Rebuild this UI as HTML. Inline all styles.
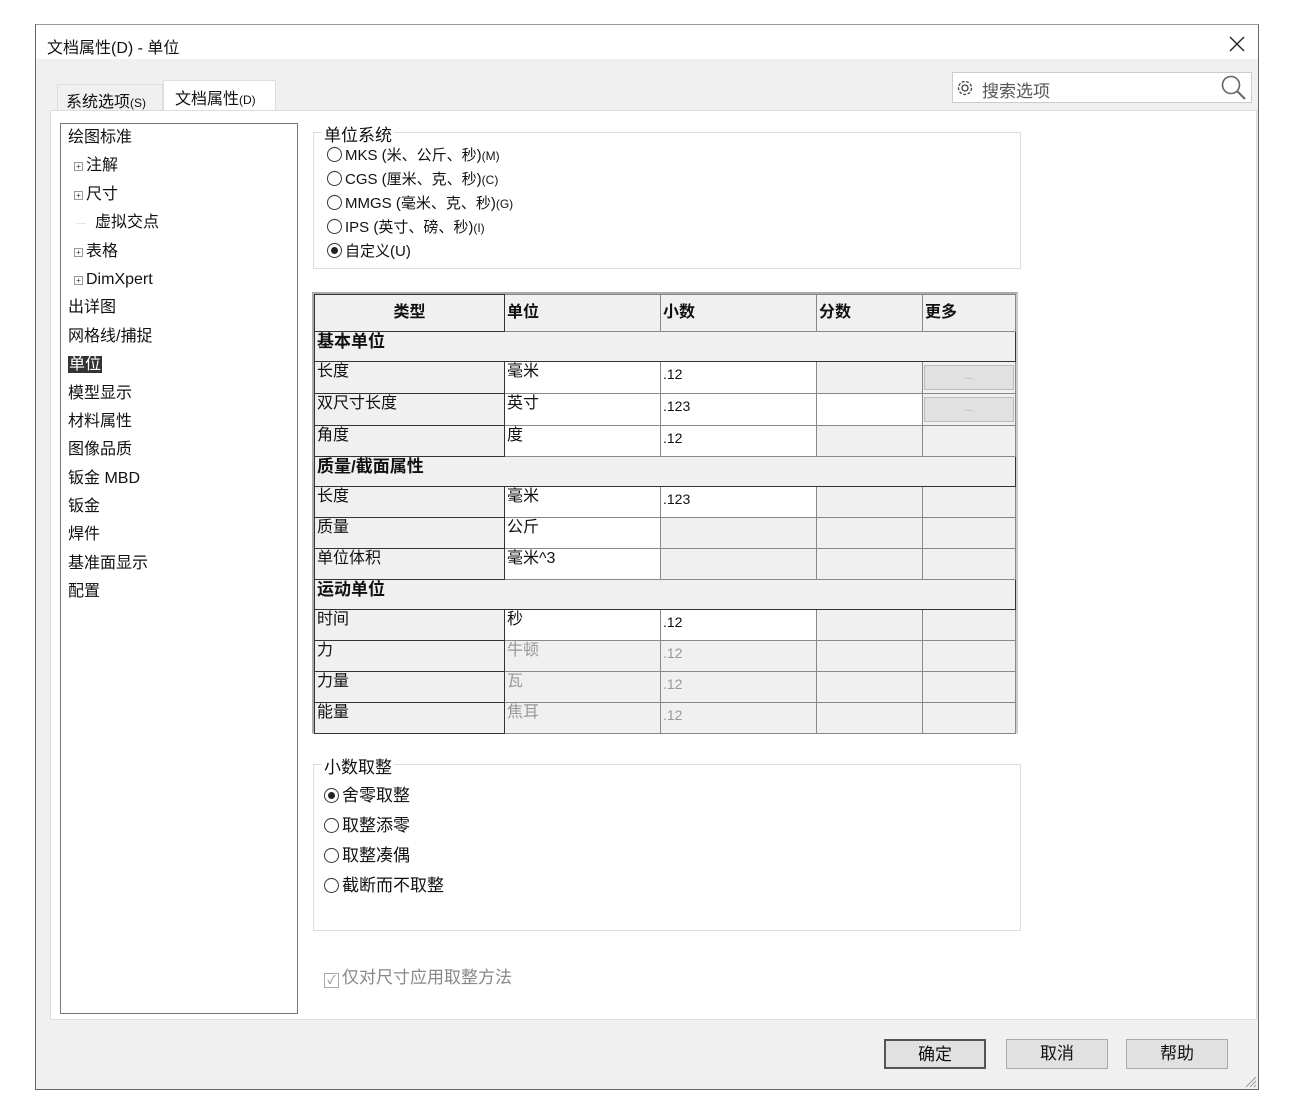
<!DOCTYPE html>
<html><head><meta charset="utf-8"><style>
*{margin:0;padding:0;box-sizing:border-box}
body{width:1306px;height:1106px;background:#fff;font-family:"Liberation Sans","Noto Sans CJK SC",sans-serif;font-size:16px;color:#111;position:relative;overflow:hidden}
.a{position:absolute}
.dlg{left:35px;top:24px;width:1224px;height:1066px;border:1px solid #666;border-top:1px solid #999;background:#f0f0f0}
.tb{left:36px;top:25px;width:1222px;height:34px;background:#fff}
table{border-collapse:collapse;table-layout:fixed;position:absolute;left:314px;top:294px}
td{border:1px solid #888;height:31px;vertical-align:top;padding:0 2px;font-size:16px;line-height:20px;background:#f0f0f0;white-space:nowrap;overflow:hidden}
td.t{border:1.5px solid #333}
td.w{background:#fff}
td.g{color:#999}
td.n{font-size:14px;padding-top:2px}
tr.h td{height:37px;font-weight:bold;vertical-align:middle}
tr.s td{height:30px;font-weight:bold;border:1.5px solid #333;font-size:17px}
.btn{display:block;margin:3px 1px;height:25px;border:1px solid #bbb;background:#e1e1e1;color:#999;font-size:10px;text-align:center;line-height:22px}
.rad{display:inline-block;width:15px;height:15px;border:1.5px solid #333;border-radius:50%;vertical-align:-2px;margin-right:3px;position:relative}
.rad.on::after{content:"";position:absolute;left:2.5px;top:2.5px;width:7px;height:7px;border-radius:50%;background:#222}
.grp{border:1px solid #ddd}
.lg{background:#fff;padding:0 2px}
.bt{width:102px;height:30px;border:1px solid #aaa;background:#e1e1e1;text-align:center;line-height:28px;font-size:17px}
.tree div{height:28.4px;line-height:28px;font-size:16px}
.pl{display:inline-block;width:9px;height:9px;border:1px solid #999;font-size:8px;line-height:7px;text-align:center;color:#333;margin:0 3px 0 6px;vertical-align:1px}
</style></head><body>
<div class="a dlg"></div>
<div class="a tb"></div>
<div class="a" style="left:47px;top:34px;font-size:16px">文档属性(D) - 单位</div>
<svg class="a" style="left:1229px;top:36px" width="16" height="16"><path d="M1 1L15 15M15 1L1 15" stroke="#222" stroke-width="1.4"/></svg>
<!-- tabs -->
<div class="a" style="left:57px;top:84px;width:106px;height:27px;border:1px solid #ddd;border-bottom:none;background:#f0f0f0"></div>
<div class="a" style="left:66px;top:88px;font-size:16px">系统选项<span style="font-size:12px">(S)</span></div>
<div class="a" style="left:163px;top:80px;width:113px;height:31px;border:1px solid #ddd;border-bottom:none;background:#fff"></div>
<div class="a" style="left:175px;top:85px;font-size:16px">文档属性<span style="font-size:12px">(D)</span></div>
<!-- search -->
<div class="a" style="left:952px;top:72px;width:300px;height:31px;border:1px solid #ccc;background:#fff"></div>
<svg class="a" style="left:955px;top:78px" width="20" height="20"><circle cx="10" cy="10" r="6.5" fill="none" stroke="#444" stroke-width="1.3" stroke-dasharray="3 1.5"/><circle cx="10" cy="10" r="3" fill="none" stroke="#444" stroke-width="1.3"/></svg>
<div class="a" style="left:982px;top:77px;font-size:17px;color:#555">搜索选项</div>
<svg class="a" style="left:1220px;top:74px" width="28" height="28"><circle cx="11" cy="11" r="8.5" fill="none" stroke="#666" stroke-width="1.6"/><line x1="17" y1="17" x2="25" y2="25" stroke="#666" stroke-width="2"/></svg>
<!-- panel -->
<div class="a" style="left:50px;top:110px;width:1207px;height:910px;background:#fff;border:1px solid #ddd"></div>
<!-- tree -->
<div class="a" style="left:60px;top:123px;width:238px;height:891px;border:1px solid #777;background:#fff"></div>
<div class="a tree" style="left:68px;top:124px">
<div>绘图标准</div>
<div><span class="pl">+</span>注解</div>
<div><span class="pl">+</span>尺寸</div>
<div><span style="display:inline-block;width:27px;color:#aaa;font-size:10px;padding-left:8px">┈</span>虚拟交点</div>
<div><span class="pl">+</span>表格</div>
<div><span class="pl">+</span>DimXpert</div>
<div>出详图</div>
<div>网格线/捕捉</div>
<div><span style="background:#333;color:#fff;padding:0 1px">单位</span></div>
<div>模型显示</div>
<div>材料属性</div>
<div>图像品质</div>
<div>钣金 MBD</div>
<div>钣金</div>
<div>焊件</div>
<div>基准面显示</div>
<div>配置</div>
</div>
<!-- unit system -->
<div class="a grp" style="left:313px;top:132px;width:708px;height:137px"></div>
<div class="a lg" style="left:322px;top:121px;font-size:17px">单位系统</div>
<div class="a" style="left:327px;top:144px;line-height:23px;font-size:15px">
<div><span class="rad"></span>MKS (米、公斤、秒)<span style="font-size:12px">(M)</span></div>
<div><span class="rad"></span>CGS (厘米、克、秒)<span style="font-size:12px">(C)</span></div>
<div><span class="rad"></span>MMGS (毫米、克、秒)<span style="font-size:12px">(G)</span></div>
<div><span class="rad"></span>IPS (英寸、磅、秒)<span style="font-size:12px">(I)</span></div>
<div><span class="rad on"></span>自定义(U)</div>
</div>
<!-- table -->
<div class="a" style="left:312px;top:292px;width:706px;height:442px;border:2px solid #aaa;border-right-color:#ccc;border-bottom-color:#ddd"></div>
<table>
<colgroup><col style="width:190px"><col style="width:156px"><col style="width:156px"><col style="width:106px"><col style="width:93px"></colgroup>
<tr class="h"><td class="t" style="text-align:center">类型</td><td>单位</td><td>小数</td><td>分数</td><td>更多</td></tr>
<tr class="s"><td colspan="5">基本单位</td></tr>
<tr><td class="t">长度</td><td class="w">毫米</td><td class="w n">.12</td><td></td><td style="padding:0"><span class="btn">...</span></td></tr>
<tr><td class="t">双尺寸长度</td><td class="w">英寸</td><td class="w n">.123</td><td class="w"></td><td style="padding:0"><span class="btn">...</span></td></tr>
<tr><td class="t">角度</td><td class="w">度</td><td class="w n">.12</td><td></td><td></td></tr>
<tr class="s"><td colspan="5">质量/截面属性</td></tr>
<tr><td class="t">长度</td><td class="w">毫米</td><td class="w n">.123</td><td></td><td></td></tr>
<tr><td class="t">质量</td><td class="w">公斤</td><td></td><td></td><td></td></tr>
<tr><td class="t">单位体积</td><td class="w">毫米^3</td><td></td><td></td><td></td></tr>
<tr class="s"><td colspan="5">运动单位</td></tr>
<tr><td class="t">时间</td><td class="w">秒</td><td class="w n">.12</td><td></td><td></td></tr>
<tr><td class="t">力</td><td class="g">牛顿</td><td class="g n">.12</td><td></td><td></td></tr>
<tr><td class="t">力量</td><td class="g">瓦</td><td class="g n">.12</td><td></td><td></td></tr>
<tr><td class="t" style="height:28px">能量</td><td class="g">焦耳</td><td class="g n">.12</td><td></td><td></td></tr>
</table>
<!-- rounding -->
<div class="a grp" style="left:313px;top:764px;width:708px;height:167px"></div>
<div class="a lg" style="left:322px;top:753px;font-size:17px">小数取整</div>
<div class="a" style="left:324px;top:781px;line-height:30px;font-size:17px">
<div><span class="rad on"></span>舍零取整</div>
<div><span class="rad"></span>取整添零</div>
<div><span class="rad"></span>取整凑偶</div>
<div><span class="rad"></span>截断而不取整</div>
</div>
<div class="a" style="left:324px;top:963px;font-size:17px;color:#888"><span style="display:inline-block;width:15px;height:15px;border:1px solid #aaa;font-size:12px;line-height:13px;text-align:center;vertical-align:-1px;margin-right:3px">✓</span>仅对尺寸应用取整方法</div>
<!-- buttons -->
<div class="a bt" style="left:884px;top:1039px;border:2px solid #555">确定</div>
<div class="a bt" style="left:1006px;top:1039px">取消</div>
<div class="a bt" style="left:1126px;top:1039px">帮助</div>
<svg class="a" style="left:1242px;top:1073px" width="16" height="16"><path d="M14 4L4 14M14 8L8 14M14 12L12 14" stroke="#999" stroke-width="1"/></svg>
</body></html>
